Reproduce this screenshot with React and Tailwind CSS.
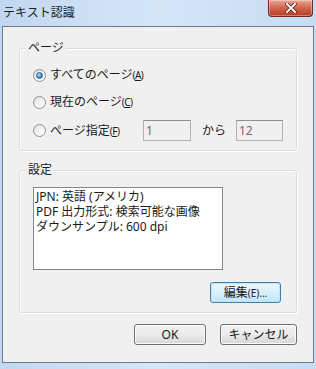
import React from 'react';

const font = { fontFamily: '"Noto Sans", "Noto Sans CJK JP", sans-serif' };

// ラジオボタン (Windows 7 風)
const Radio = ({ checked }) => (
    <span className="relative flex h-[13px] w-[13px] shrink-0 items-center justify-center rounded-full border border-[#8e8f8f] bg-gradient-to-br from-[#dcdcdc] via-[#f4f4f4] to-white">
        {checked && (
            <span className="h-[7px] w-[7px] rounded-full border border-[#2c628b] bg-[radial-gradient(circle_at_35%_35%,#b4e0ff,#3d8bd0_60%,#1d5a99)]" />
        )}
    </span>
);

const Key = ({ k }) => (
    <span className="text-[10px] tracking-[-0.5px]">(<u>{k}</u>)</span>
);

const GroupBox = ({ label, className, children }) => (
    <div className={`relative mx-[15px] rounded-[3px] border border-[#d5dfe5] shadow-[inset_1px_1px_0_#fff,1px_1px_0_#fff] ${className}`}>
        <span className="absolute -top-[9px] left-[6px] bg-[#f0f0f0] px-[2px] text-[12px] leading-[16px] text-[#1a1a1a]">{label}</span>
        {children}
    </div>
);

const Button = ({ children, className, focused }) => (
    <button
        className={`flex h-[21px] items-center justify-center rounded-[3px] border text-[12px] leading-none text-[#1a1a1a] ${
            focused
                ? 'border-[#3c7fb1] bg-gradient-to-b from-[#eaf6fd] via-[#d9f0fc] to-[#bee6fd] shadow-[inset_0_0_0_1px_#c2e4f6]'
                : 'border-[#707070] bg-gradient-to-b from-[#f2f2f2] via-[#ebebeb] to-[#d6d6d6] shadow-[inset_0_0_0_1px_#fcfcfc]'
        } ${className}`}
    >
        {children}
    </button>
);

const DisabledInput = ({ value, className }) => (
    <div className={`flex h-[21px] items-center border border-[#adb2b5] border-t-[#8e8f8f] bg-[#f0f0f0] pl-[2px] text-[12px] text-[#6d6d6d] ${className}`}>
        {value}
    </div>
);

export default function App() {
    return (
        <div className="flex h-[369px] w-[316px] flex-col bg-gradient-to-r from-[#c2d8f0] via-[#d4e6f8] to-[#c6dcf2]" style={font}>
            {/* タイトルバー */}
            <div className="relative flex h-[26px] shrink-0 items-center pl-[3px]">
                <span className="text-[12px] text-[#1e1e1e]">テキスト認識</span>
                <div className="absolute right-[3px] top-0 flex h-[17px] w-[45px] items-center justify-center rounded-b-[4px] border border-t-0 border-[#6e2a1f] bg-gradient-to-b from-[#e9a696] via-[#d0644d] to-[#b83a22] shadow-[inset_0_0_0_1px_rgba(255,255,255,0.35)]">
                    <svg width="12" height="10" viewBox="0 0 12 10">
                        <path d="M2 1 L10 9 M10 1 L2 9" stroke="#5a2016" strokeWidth="3.6" strokeLinecap="square" />
                        <path d="M2 1 L10 9 M10 1 L2 9" stroke="#fff" strokeWidth="2" strokeLinecap="square" />
                    </svg>
                </div>
            </div>

            {/* クライアント領域 */}
            <div className="mx-[2px] flex h-[337px] shrink-0 flex-col border border-[#6f7b89] bg-[#f0f0f0] text-[12px] text-[#1a1a1a]">
                <div className="mx-[1px] flex flex-1 flex-col">
                    {/* ページ */}
                    <GroupBox label="ページ" className="mt-[21px] pb-[9px] pl-[13px] pt-[16px]">
                        <div className="flex flex-col gap-[7px]">
                            <label className="flex h-[20px] items-center gap-[4px]">
                                <Radio checked />
                                <span>すべてのページ<Key k="A" /></span>
                            </label>
                            <label className="flex h-[20px] items-center gap-[4px]">
                                <Radio />
                                <span>現在のページ<Key k="C" /></span>
                            </label>
                            <div className="mt-[1px] flex h-[21px] items-center">
                                <label className="flex w-[110px] items-center gap-[4px]">
                                    <Radio />
                                    <span>ページ指定<Key k="F" /></span>
                                </label>
                                <DisabledInput value="1" className="w-[48px]" />
                                <span className="ml-[11px] w-[34px]">から</span>
                                <DisabledInput value="12" className="w-[47px]" />
                            </div>
                        </div>
                    </GroupBox>

                    {/* 設定 */}
                    <GroupBox label="設定" className="mt-[19px] flex flex-col pb-[9px] pl-[13px] pr-[15px] pt-[16px]">
                        <div className="h-[83px] w-[190px] border border-[#828790] bg-white px-[2px] pt-[1px] text-[12px] leading-[15px]">
                            <div>JPN: 英語 (アメリカ)</div>
                            <div>PDF 出力形式: 検索可能な画像</div>
                            <div>ダウンサンプル: 600 dpi</div>
                        </div>
                        <div className="mt-[12px] flex justify-end">
                            <Button focused className="w-[71px]">
                                編集<span className="text-[10px]">(E)...</span>
                            </Button>
                        </div>
                    </GroupBox>

                    {/* ボタン */}
                    <div className="mr-[15px] mt-[11px] flex justify-end gap-[14px]">
                        <Button className="w-[72px]">OK</Button>
                        <Button className="w-[77px]">キャンセル</Button>
                    </div>
                </div>
            </div>
        </div>
    );
}
